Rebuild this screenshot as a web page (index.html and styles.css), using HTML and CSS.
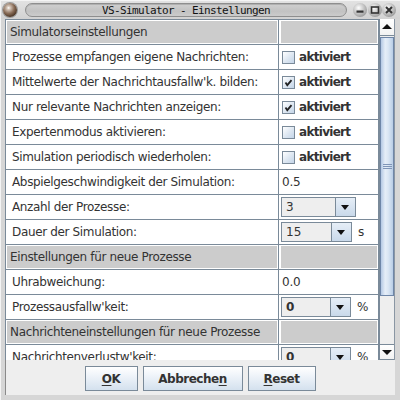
FILE: index.html
```html
<!DOCTYPE html>
<html>
<head>
<meta charset="utf-8">
<link rel="stylesheet" href="styles.css">
</head>
<body>
<div class="win">
  <div class="titlebar">
    <span class="orb"></span>
    <div class="pill"><span class="title">VS-Simulator - Einstellungen</span></div>
    <div class="wbtns">
      <span class="wb"><svg width="14" height="14" viewBox="0 0 14 14"><rect x="3.5" y="7.5" width="7" height="2.2" fill="#333"/></svg></span>
      <span class="wb"><svg width="14" height="14" viewBox="0 0 14 14"><rect x="3.5" y="4" width="7" height="6" fill="none" stroke="#333" stroke-width="1.6"/></svg></span>
      <span class="wb"><svg width="14" height="14" viewBox="0 0 14 14"><path d="M4 4 L10 10 M10 4 L4 10" stroke="#333" stroke-width="2"/></svg></span>
    </div>
  </div>
  <div class="frame">
    <div class="pane">
      <div class="viewport">
        <div class="row head"><div class="c1"><div class="hd">Simulatorseinstellungen</div></div><div class="c2"><div class="hd2"></div></div></div>
        <div class="row"><div class="c1 lbl">Prozesse empfangen eigene Nachrichten:</div><div class="c2 val"><span class="cb"></span><b class="akt">aktiviert</b></div></div>
        <div class="row"><div class="c1 lbl">Mittelwerte der Nachrichtausfallw'k. bilden:</div><div class="c2 val"><span class="cb"><svg width="11" height="11" viewBox="0 0 11 11"><path d="M2.5 5.5 L4.3 8.2 L8.5 3.2" fill="none" stroke="#222" stroke-width="1.8"/></svg></span><b class="akt">aktiviert</b></div></div>
        <div class="row"><div class="c1 lbl">Nur relevante Nachrichten anzeigen:</div><div class="c2 val"><span class="cb"><svg width="11" height="11" viewBox="0 0 11 11"><path d="M2.5 5.5 L4.3 8.2 L8.5 3.2" fill="none" stroke="#222" stroke-width="1.8"/></svg></span><b class="akt">aktiviert</b></div></div>
        <div class="row"><div class="c1 lbl">Expertenmodus aktivieren:</div><div class="c2 val"><span class="cb"></span><b class="akt">aktiviert</b></div></div>
        <div class="row"><div class="c1 lbl">Simulation periodisch wiederholen:</div><div class="c2 val"><span class="cb"></span><b class="akt">aktiviert</b></div></div>
        <div class="row"><div class="c1 lbl">Abspielgeschwindigkeit der Simulation:</div><div class="c2 val">0.5</div></div>
        <div class="row"><div class="c1 lbl">Anzahl der Prozesse:</div><div class="c2 cmbcell"><span class="combo w75"><span class="ctext">3</span><span class="carrow"></span></span></div></div>
        <div class="row"><div class="c1 lbl">Dauer der Simulation:</div><div class="c2 cmbcell"><span class="combo w71"><span class="ctext">15</span><span class="carrow"></span></span><span class="unit">s</span></div></div>
        <div class="row head"><div class="c1"><div class="hd">Einstellungen für neue Prozesse</div></div><div class="c2"><div class="hd2"></div></div></div>
        <div class="row"><div class="c1 lbl">Uhrabweichung:</div><div class="c2 val">0.0</div></div>
        <div class="row"><div class="c1 lbl">Prozessausfallw'keit:</div><div class="c2 cmbcell"><span class="combo w70"><span class="ctext bold">0</span><span class="carrow"></span></span><span class="unit">%</span></div></div>
        <div class="row head"><div class="c1"><div class="hd">Nachrichteneinstellungen für neue Prozesse</div></div><div class="c2"><div class="hd2"></div></div></div>
        <div class="row"><div class="c1 lbl">Nachrichtenverlustw'keit:</div><div class="c2 cmbcell"><span class="combo w70"><span class="ctext bold">0</span><span class="carrow"></span></span><span class="unit">%</span></div></div>
      </div>
      <div class="sbar">
        <div class="sb-btn up"><span class="tri-up"></span></div>
        <div class="sb-track"><div class="thumb"><span class="grip"></span></div></div>
        <div class="sb-btn down"><span class="tri-down"></span></div>
      </div>
    </div>
    <div class="btnrow">
      <span class="btn b-ok"><u>O</u>K</span>
      <span class="btn b-ab">Abbreche<u>n</u></span>
      <span class="btn b-re"><u>R</u>eset</span>
    </div>
  </div>
</div>
</body>
</html>
```
FILE: styles.css
```css
* { box-sizing: border-box; }
html, body { margin: 0; padding: 0; }
body { width: 400px; height: 400px; overflow: hidden; background: #d4d4d4; font-family: "DejaVu Sans", sans-serif; }

.win { width: 400px; height: 400px; display: flex; flex-direction: column; background: #d6d6d6; border-left: 1px solid #f4f4f4; border-top: 1px solid #f4f4f4; }

.titlebar { height: 18px; display: flex; align-items: center; position: relative; background: linear-gradient(#e2e2e2, #d2d2d2); }
.orb { width: 14px; height: 14px; margin-left: 2px; border-radius: 50%; background: radial-gradient(circle at 40% 35%, #ffffff 0, #d9cbbf 12%, #8a6d58 45%, #4a3424 75%, #2a1a10 100%); box-shadow: 0 0 0 1px #9a9a9a; }
.pill { margin-left: 8px; width: 322px; height: 14px; border-radius: 7px; border: 1px solid #8e8e8e; background: linear-gradient(#cfcfcf, #c2c2c2 60%, #cbcbcb); display: flex; align-items: center; justify-content: center; box-shadow: inset 0 1px 0 #b0b0b0; }
.title { font-family: "DejaVu Sans Mono", monospace; font-size: 11px; letter-spacing: -0.62px; color: #111; line-height: 12px; padding-top: 1px; }
.wbtns { display: flex; margin-left: 6px; gap: 0; }
.wb { width: 14px; height: 14px; border-radius: 50%; margin-right: 0.5px; background: radial-gradient(circle at 40% 35%, #ffffff 0, #dcdcdc 25%, #9c9c9c 75%, #6e6e6e 100%); display: flex; }

.frame { flex: 1; display: flex; flex-direction: column; border-left: 4px solid #d6d6d6; border-right: 5px solid #d6d6d6; border-bottom: 5px solid #d6d6d6; background: #eeeeee; box-shadow: inset 1px 0 0 #8a8a8a; }
.pane { display: flex; height: 341px; }
.viewport { width: 374px; height: 341px; overflow: hidden; border: 1px solid #7a8a99; border-bottom: none; background: #fff; color: #333333; font-size: 12px; }
.row { display: flex; height: 25px; border-bottom: 1px solid #7a8a99; }
.c1 { width: 273px; border-right: 1px solid #7a8a99; height: 24px; }
.c2 { width: 99px; height: 24px; display: flex; align-items: center; }
.lbl { padding-left: 6px; line-height: 24px; letter-spacing: -0.35px; white-space: nowrap; overflow: hidden; }
.head .c1 { padding: 1px; }
.hd { background: #cccccc; height: 22px; line-height: 22px; padding-left: 3px; letter-spacing: -0.35px; white-space: nowrap; overflow: hidden; }
.head .c2 { padding: 1px 1px 1px 2px; }
.hd2 { background: #cccccc; width: 100%; height: 22px; }
.val { padding-left: 3px; letter-spacing: -0.2px; }
.cb { width: 13px; height: 13px; border: 1px solid #7a8a99; background: linear-gradient(135deg, #ffffff, #dce6f1 55%, #c4d5e8); display: flex; align-items: center; justify-content: center; flex: none; }
.akt { margin-left: 4px; font-weight: bold; letter-spacing: -0.7px; }
.cmbcell { padding-left: 2px; }
.combo { display: flex; height: 20px; border: 1px solid #7a8a99; background: #eeeeee; }
.w75 { width: 75px; } .w71 { width: 71px; } .w70 { width: 70px; }
.ctext { flex: 1; padding-left: 4px; line-height: 18px; font-size: 12px; }
.ctext.bold { font-weight: bold; }
.carrow { width: 20px; border-left: 1px solid #7a8a99; background: linear-gradient(#e6eef7, #c9d9ea); position: relative; }
.carrow::after { content: ""; position: absolute; left: 5px; top: 7px; border-left: 4.5px solid transparent; border-right: 4.5px solid transparent; border-top: 5px solid #111; }
.unit { margin-left: 6px; font-size: 12px; }

.sbar { width: 16px; height: 341px; display: flex; flex-direction: column; border-left: 1px solid #7a8a99; border-right: 1px solid #8a96a3; background: #eeeeee; }
.sb-btn { height: 17px; background: linear-gradient(#ffffff, #f2f2f2); position: relative; flex: none; }
.sb-btn.up { border-bottom: 1px solid #7a8a99; }
.sb-btn.down { height: 16px; border-top: 1px solid #7a8a99; border-bottom: 1px solid #7a8a99; }
.tri-up { position: absolute; left: 2px; top: 5px; border-left: 5px solid transparent; border-right: 5px solid transparent; border-bottom: 5px solid #111; }
.tri-down { position: absolute; left: 2px; top: 5px; border-left: 5px solid transparent; border-right: 5px solid transparent; border-top: 5px solid #111; }
.sb-track { flex: 1; padding-top: 1px; }
.thumb { height: 259px; border: 1px solid #6f86a8; background: linear-gradient(to right, #b4c8e4, #e6eef8 35%, #dbe6f4 60%, #b8cde6); display: flex; align-items: center; justify-content: center; }
.grip { width: 9px; height: 5px; background: repeating-linear-gradient(#7f95b8 0 1px, transparent 1px 2px); }

.btnrow { display: flex; justify-content: center; gap: 5px; margin-top: 6px; height: 25px; }
.btn { height: 25px; border: 1px solid #7a8a99; background: linear-gradient(#ffffff, #eef3f9 40%, #d4e1ee); display: flex; align-items: center; justify-content: center; font-weight: bold; font-size: 12px; color: #333; letter-spacing: -0.5px; }
.btn u { text-decoration-thickness: 1px; text-underline-offset: 2px; }
.b-ok { width: 53px; } .b-ab { width: 100px; } .b-re { width: 68px; }
```
